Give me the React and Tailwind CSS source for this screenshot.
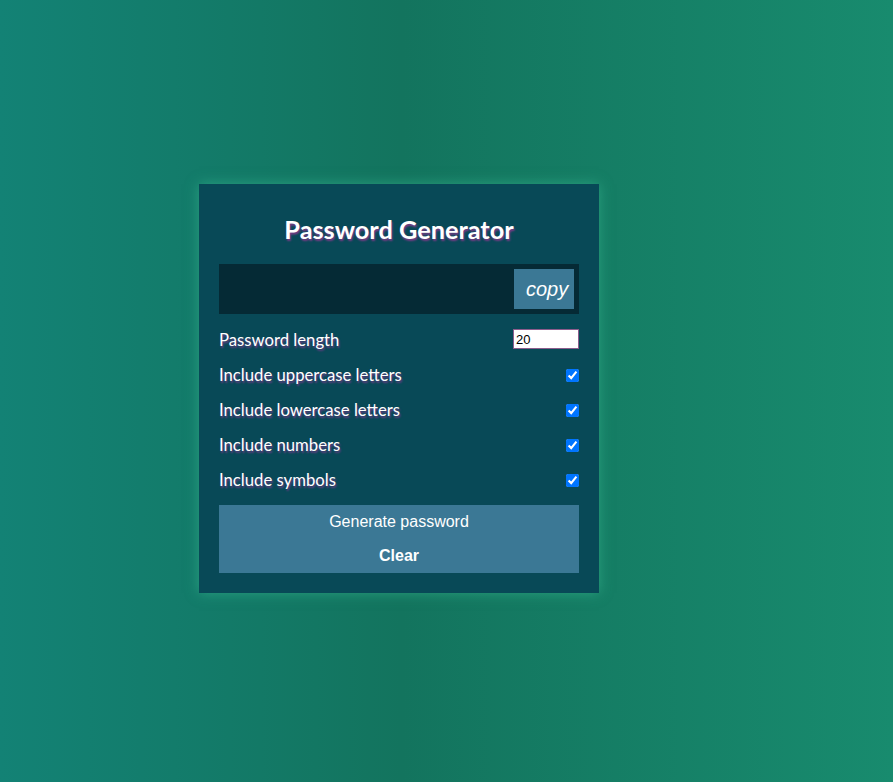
import React, { useState } from 'react';

const rows = [
  'Include uppercase letters',
  'Include lowercase letters',
  'Include numbers',
  'Include symbols',
];

export default function App() {
  const [length, setLength] = useState(20);
  const [password, setPassword] = useState('');

  return (
    <div className="min-h-screen bg-[linear-gradient(90deg,#138275_0%,#13745e_45%,#188b6e_100%)] pt-[184px] pl-[199px] font-['Lato',sans-serif]">
      <div className="w-[400px] bg-[#084957] px-5 pt-5 pb-5 shadow-[0_0_12px_rgba(60,190,150,0.55)]">
        <h2 className="mt-[7px] mb-[17px] text-center text-[25.3px] leading-[36px] font-bold text-white [text-shadow:1px_2px_2px_#7a3b86]">
          Password Generator
        </h2>

        <div className="flex h-[50px] items-center justify-between bg-[#052a35] pl-3 pr-[5px] text-white">
          <span className="text-[18px]">{password}</span>
          <button className="h-10 w-[60px] bg-[#3b7895] pl-[12px] text-left font-['Liberation_Sans',sans-serif] text-[20px] italic text-white">
            copy
          </button>
        </div>

        <div className="mt-[15px] flex h-5 items-center justify-between text-[16.7px] text-white [text-shadow:1px_2px_2px_#6d3b86]">
          <label className="pt-[4px]">Password length</label>
          <input
            type="number"
            value={length}
            onChange={(e) => setLength(e.target.value)}
            className="h-5 w-[66px] border border-[#8c5c8c] bg-white px-[2px] font-['Liberation_Sans',sans-serif] text-[13px] text-black [text-shadow:none]"
          />
        </div>

        {rows.map((label) => (
          <div key={label} className="mt-[15px] flex h-5 items-center justify-between text-[16.7px] text-white [text-shadow:1px_2px_2px_#6d3b86]">
            <label className="pt-[4px]">{label}</label>
            <input type="checkbox" defaultChecked className="m-0 mt-[2px] h-[13px] w-[13px] accent-[#0075ff]" />
          </div>
        ))}

        <div className="mt-4 bg-[#3b7895] font-['Liberation_Sans',sans-serif] text-[16px] text-white">
          <button className="block h-[34px] w-full" onClick={() => setPassword('')}>
            Generate password
          </button>
          <button className="block h-[34px] w-full font-bold" onClick={() => setPassword('')}>
            Clear
          </button>
        </div>
      </div>
    </div>
  );
}
